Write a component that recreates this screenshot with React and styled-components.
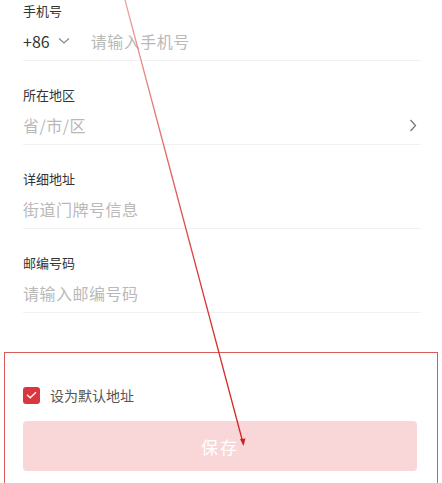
import * as React from 'react';
import styled, { createGlobalStyle } from 'styled-components';

const GlobalStyle = createGlobalStyle`
  html, body {
    margin: 0;
    padding: 0;
    background: #ffffff;
  }
  body {
    font-family: 'Noto Sans CJK SC', 'Noto Sans', 'Liberation Sans', sans-serif;
  }
`;

const Page = styled.div`
  position: relative;
  width: 442px;
  height: 483px;
  overflow: hidden;
  background: #fff;
  box-sizing: border-box;
  padding: 2px 21px 0 23px;
`;

const Form = styled.div`
  display: flex;
  flex-direction: column;
  gap: 25px;
`;

const Field = styled.div`
  display: flex;
  flex-direction: column;
`;

const Label = styled.div`
  font-size: 13px;
  line-height: 18px;
  color: #333;
  margin-bottom: 2px;
`;

const InputRow = styled.div`
  display: flex;
  align-items: center;
  height: 38px;
  border-bottom: 1px solid #f1f1f1;
`;

const Code = styled.span`
  font-size: 16px;
  color: #333;
  display: flex;
  align-items: center;
  gap: 8px;
  margin-right: 21px;
`;

const Placeholder = styled.span`
  flex: 1;
  font-size: 16px;
  color: #b9b9b9;
  letter-spacing: 0.5px;
`;

const Arrow = styled.span`
  display: flex;
  margin-right: 4px;
`;

const Footer = styled.div`
  margin-top: 73px;
  display: flex;
  flex-direction: column;
  margin-right: 4px;
`;

const CheckRow = styled.div`
  display: flex;
  align-items: center;
  gap: 10px;
  height: 18px;
`;

const Box = styled.span`
  width: 17px;
  height: 17px;
  border-radius: 3px;
  background: #d9363e;
  display: flex;
  align-items: center;
  justify-content: center;
`;

const CheckText = styled.span`
  font-size: 14px;
  color: #555;
`;

const SaveButton = styled.button`
  margin-top: 17px;
  height: 50px;
  border: none;
  border-radius: 4px;
  background: #f9d7d9;
  color: #fff;
  font-family: inherit;
  font-size: 17px;
  letter-spacing: 2px;
`;

const Highlight = styled.div`
  position: absolute;
  left: 4px;
  top: 352px;
  width: 434px;
  height: 150px;
  box-sizing: border-box;
  border: 1.5px solid #dc5a55;
  pointer-events: none;
`;

const Overlay = styled.svg`
  position: absolute;
  left: 0;
  top: 0;
  pointer-events: none;
`;

function ChevronDown() {
  return (
    <svg width="12" height="8" viewBox="0 0 12 8">
      <path d="M1 1.5 L6 6 L11 1.5" fill="none" stroke="#8a8a8a" strokeWidth="1.2" />
    </svg>
  );
}

function ChevronRight() {
  return (
    <Arrow>
      <svg width="8" height="13" viewBox="0 0 8 13">
        <path d="M1.5 1 L6.5 6.5 L1.5 12" fill="none" stroke="#777" strokeWidth="1.3" />
      </svg>
    </Arrow>
  );
}

export default function App() {
  return (
    <>
      <GlobalStyle />
      <Page>
        <Form>
          <Field>
            <Label>手机号</Label>
            <InputRow>
              <Code>
                +86 <ChevronDown />
              </Code>
              <Placeholder>请输入手机号</Placeholder>
            </InputRow>
          </Field>
          <Field>
            <Label>所在地区</Label>
            <InputRow>
              <Placeholder>省/市/区</Placeholder>
              <ChevronRight />
            </InputRow>
          </Field>
          <Field>
            <Label>详细地址</Label>
            <InputRow>
              <Placeholder>街道门牌号信息</Placeholder>
            </InputRow>
          </Field>
          <Field>
            <Label>邮编号码</Label>
            <InputRow>
              <Placeholder>请输入邮编号码</Placeholder>
            </InputRow>
          </Field>
        </Form>
        <Footer>
          <CheckRow>
            <Box>
              <svg width="11" height="8" viewBox="0 0 11 8">
                <path d="M1 3.8 L4.2 6.8 L10 1.2" fill="none" stroke="#fff" strokeWidth="1.3" />
              </svg>
            </Box>
            <CheckText>设为默认地址</CheckText>
          </CheckRow>
          <SaveButton type="button">保存</SaveButton>
        </Footer>
        <Highlight />
        <Overlay width="442" height="483" viewBox="0 0 442 483">
          <defs>
            <linearGradient id="arrowFade" gradientUnits="userSpaceOnUse" x1="0" y1="0" x2="0" y2="445">
              <stop offset="0" stopColor="#eaa3a1" />
              <stop offset="0.6" stopColor="#d8403c" />
              <stop offset="1" stopColor="#d1201c" />
            </linearGradient>
          </defs>
          <line x1="125" y1="0" x2="243" y2="443" stroke="url(#arrowFade)" strokeWidth="1.3" />
          <path d="M243.5 446 L240 439 L245.5 438.5 Z" fill="#d1201c" />
        </Overlay>
      </Page>
    </>
  );
}
